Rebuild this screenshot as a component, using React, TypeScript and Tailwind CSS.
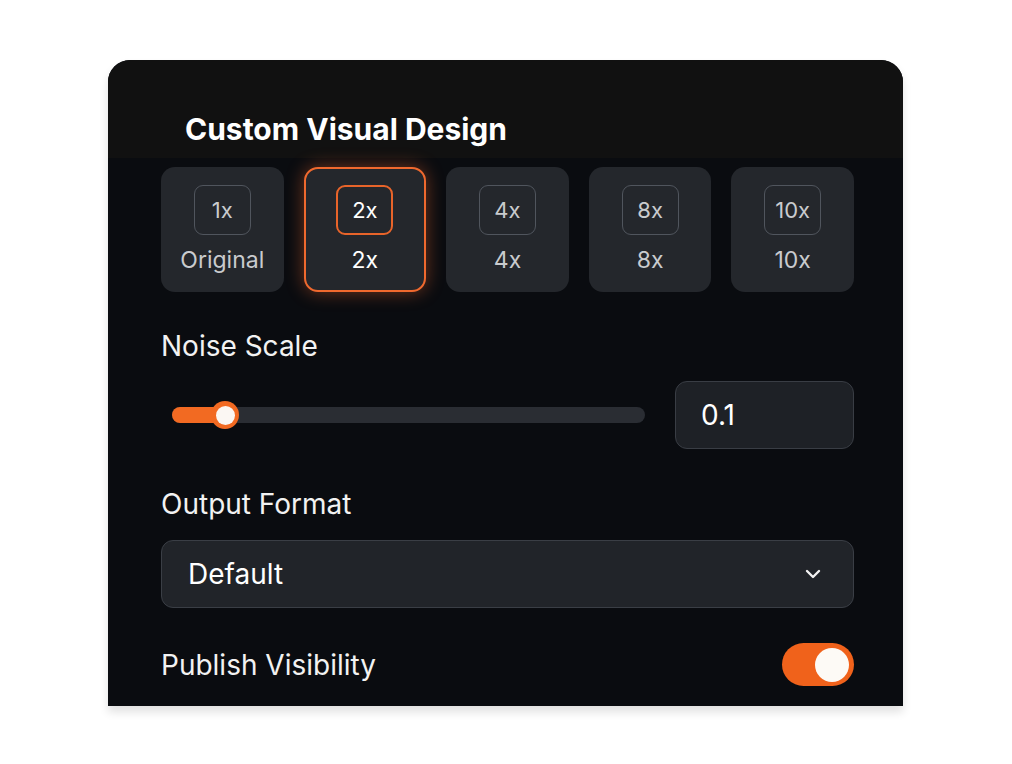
import { useState } from 'react';

const scales = [
  { badge: '1x', label: 'Original' },
  { badge: '2x', label: '2x' },
  { badge: '4x', label: '4x' },
  { badge: '8x', label: '8x' },
  { badge: '10x', label: '10x' },
];

const ScaleTile = ({ badge, label, active, onClick }: { badge: string; label: string; active: boolean; onClick: () => void }) => {
  return (
    <button
      onClick={onClick}
      className={
        active
          ? 'flex h-[125px] flex-col items-center rounded-[14px] border-2 border-[#f0692e] bg-[#24272c] pt-[16px] shadow-[0_0_18px_rgba(240,105,46,0.45)]'
          : 'flex h-[125px] flex-col items-center rounded-[14px] border-2 border-transparent bg-[#24272c] pt-[16px]'
      }
    >
      <div
        className={
          active
            ? 'flex h-[50px] w-[57px] items-center justify-center rounded-[9px] border-2 border-[#e8642a] text-[22px] text-white'
            : 'flex h-[50px] w-[57px] items-center justify-center rounded-[9px] border border-[#50555d] text-[22px] text-[#c9cbce]'
        }
      >
        {badge}
      </div>
      <span className={active ? 'mt-[11px] text-[23px] leading-[28px] text-white' : 'mt-[11px] text-[23px] leading-[28px] text-[#c9cbce]'}>
        {label}
      </span>
    </button>
  );
};

export default function App() {
  const [selected, setSelected] = useState(1);
  const [visible, setVisible] = useState(true);

  return (
    <div className="min-h-[764px] bg-white pl-[108px] pt-[60px]" style={{ fontFamily: 'Inter, "Noto Sans", sans-serif' }}>
      <div className="h-[646px] w-[795px] overflow-hidden rounded-t-[22px] bg-[#0a0c10] shadow-[0_6px_10px_rgba(0,0,0,0.12)]">
        {/* Header band */}
        <div className="h-[98px] bg-[#111111] pl-[77px] pt-[51px]">
          <h1 className="text-[30px] font-bold leading-[36px] text-white">Custom Visual Design</h1>
        </div>

        <div className="pl-[53px] pr-[49px] pt-[9px]">
          {/* Upscale factor tiles */}
          <div className="grid grid-cols-5 gap-[20px]">
            {scales.map((s, i) => (
              <ScaleTile key={s.badge} badge={s.badge} label={s.label} active={selected === i} onClick={() => setSelected(i)} />
            ))}
          </div>

          <div className="mt-[38px] text-[28px] leading-[32px] text-[#f2f2f2]">Noise Scale</div>

          <div className="mt-[19px] flex h-[68px] items-center">
            <div className="flex-1 pl-[11px] pr-[30px]">
              <div className="relative h-[16px] rounded-full bg-[#2a2d33]">
                <div className="h-full w-[56px] rounded-full bg-[#f26a22]" />
                <div className="absolute left-[39px] top-[-6px] flex h-[28px] w-[28px] items-center justify-center rounded-full bg-[#f26a22]">
                  <div className="h-[19px] w-[19px] rounded-full bg-[#fbf7f3]" />
                </div>
              </div>
            </div>
            <div className="flex h-[68px] w-[179px] items-center rounded-[12px] border border-[#393d44] bg-[#1e2126] pl-[25px] text-[28px] text-white">
              0.1
            </div>
          </div>

          <div className="mt-[39px] text-[28px] leading-[32px] text-[#f2f2f2]">Output Format</div>

          <div className="mt-[20px] flex h-[68px] items-center justify-between rounded-[12px] border border-[#3a3e45] bg-[#212429] pl-[26px] pr-[28px]">
            <span className="text-[28px] text-white">Default</span>
            <svg width="24" height="24" viewBox="0 0 24 24" fill="none" stroke="#f2f2f2" strokeWidth="2.4" strokeLinecap="round" strokeLinejoin="round">
              <path d="m6 9 6 6 6-6" />
            </svg>
          </div>

          <div className="mt-[35px] flex h-[43px] items-center justify-between">
            <span className="text-[28px] leading-[32px] text-[#f2f2f2]">Publish Visibility</span>
            <button
              onClick={() => setVisible(!visible)}
              className={
                visible
                  ? 'flex h-[43px] w-[72px] items-center justify-end rounded-full bg-[#f0621b] pr-[5px]'
                  : 'flex h-[43px] w-[72px] items-center justify-start rounded-full bg-[#3a3d44] pl-[5px]'
              }
            >
              <div className="h-[34px] w-[34px] rounded-full bg-[#fdfaf6]" />
            </button>
          </div>
        </div>
      </div>
    </div>
  );
}
